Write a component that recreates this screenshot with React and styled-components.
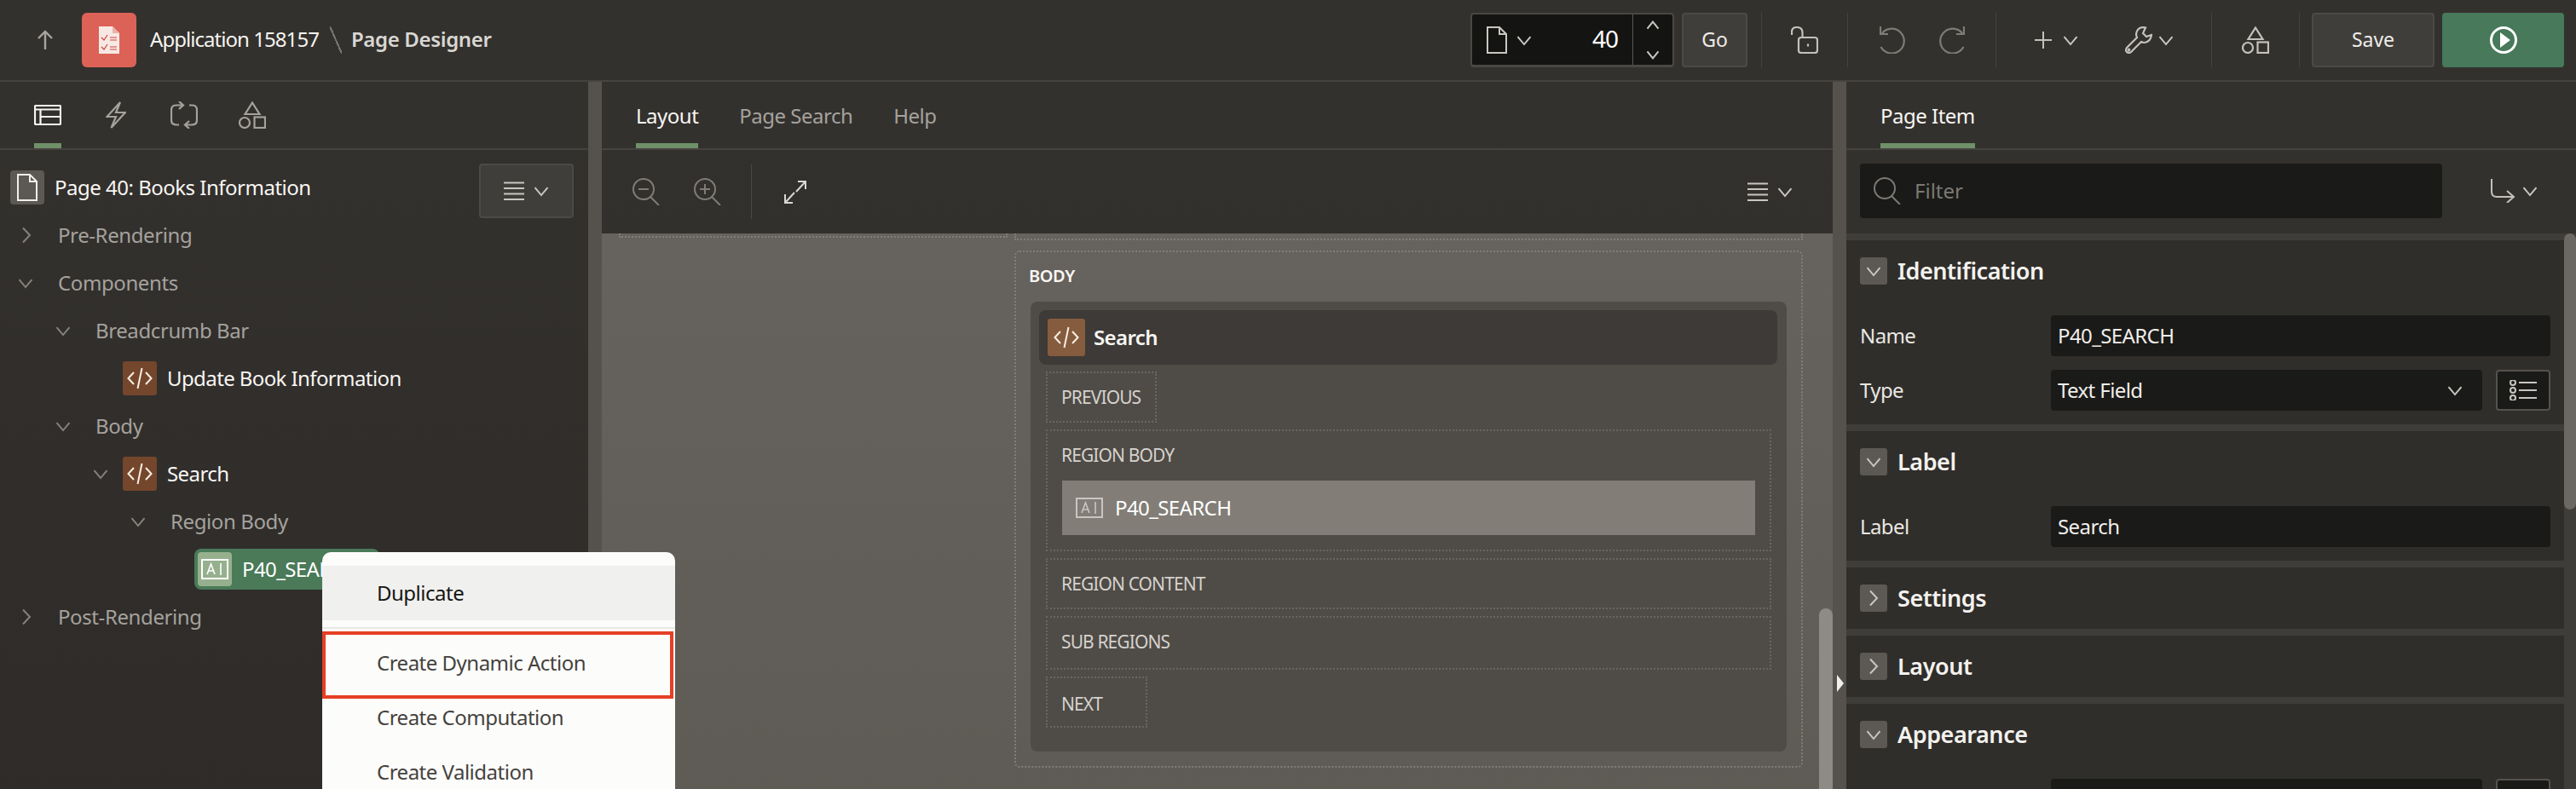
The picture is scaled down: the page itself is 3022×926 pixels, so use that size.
import React from "react";
import styled, { createGlobalStyle } from "styled-components";

const GlobalStyle = createGlobalStyle`
  html, body { margin: 0; padding: 0; background: #32302d; }
  * { box-sizing: border-box; }
  body { font-family: "Noto Sans", "Open Sans", sans-serif; }
`;

const Svg = ({ w, h, sw = 2, children, vb }) => (
  <svg width={w} height={h} viewBox={vb || `0 0 ${w} ${h}`} fill="none" stroke="currentColor" strokeWidth={sw} style={{ display: "block", flex: "none" }}>
    {children}
  </svg>
);

const ChevronDown = ({ size = 18 }) => (
  <Svg w={size} h={size}><path d={`M1.5 ${size * 0.28}L${size / 2} ${size * 0.78}L${size - 1.5} ${size * 0.28}`} /></Svg>
);
const ChevronRight = () => (
  <Svg w={12} h={20}><path d="M2 1.5L10 10L2 18.5" /></Svg>
);
const ArrowUp = () => (
  <Svg w={20} h={24}><path d="M10 23V2M2 10L10 2L18 10" strokeWidth="2.4" /></Svg>
);
const AppDoc = () => (
  <svg width="24" height="32" viewBox="0 0 24 32" style={{ display: "block" }}>
    <path d="M0 0H16L24 8V32H0Z" fill="#f8e8e4" />
    <path d="M16 0L24 8H16Z" fill="#e9b3aa" />
    <path d="M3 13L6 16L10 10M3 24L6 27L10 21M13 13H21M13 16H21M13 24H21M13 27H21" stroke="#c9453a" strokeWidth="1.2" fill="none" />
  </svg>
);
const TableIcon = () => (
  <Svg w={32} h={24} sw={2.2}><rect x="1" y="1" width="30" height="22" rx="1" /><path d="M1 5.5H31M7.5 5.5V23M7.5 14H31" /></Svg>
);
const BoltIcon = () => (
  <Svg w={24} h={32} sw={2.2}><path d="M17 1L1.5 18H12L6.5 31L23 13H12Z" /></Svg>
);
const SyncIcon = () => (
  <Svg w={32} h={32} sw={2.2}>
    <path d="M15 4.5H7Q1 4.5 1 10V22Q1 27.5 7 27.5H10M10 0L15 4.5L10 9M22 4.5H25Q31 4.5 31 10V22Q31 27.5 25 27.5H17M22 23L17 27.5L22 32" />
  </Svg>
);
const ShapesIcon = ({ size = 32 }) => (
  <Svg w={size} h={size} sw={2.2} vb="0 0 32 32">
    <path d="M16 1.5L24.5 15H7.5Z" /><circle cx="7" cy="25" r="6" /><rect x="18.5" y="18.5" width="12.5" height="12.5" />
  </Svg>
);
const PageIcon = ({ w = 24, h = 32 }) => (
  <Svg w={w} h={h} vb="0 0 24 32"><path d="M1 1H15L23 9V31H1ZM15 1V9H23" /></Svg>
);
const CodeIcon = ({ size = 30 }) => (
  <Svg w={size} h={size} sw={2} vb="0 0 30 30"><path d="M8 8L1.5 15L8 22M22 8L28.5 15L22 22M17.5 3L12.5 27" /></Svg>
);
const FieldIcon = ({ w = 32, h = 24 }) => (
  <Svg w={w} h={h} vb="0 0 32 24"><rect x="1" y="1" width="30" height="22" /><path d="M7 18L11.5 6L16 18M8.5 14H14.5M23 5V19" strokeWidth="1.6" /></Svg>
);
const MenuLines = () => (
  <Svg w={24} h={22}><path d="M0 1.5H24M0 8H24M0 14.5H24M0 21H24" /></Svg>
);
const SearchIcon = ({ children, size = 32 }) => (
  <Svg w={size} h={size} vb="0 0 32 32"><circle cx="13" cy="13" r="12" /><path d="M21 22L31 32" />{children}</Svg>
);
const ExpandIcon = () => (
  <Svg w={26} h={28}><path d="M16 2H25V11M25 2L14 14M1 17V27H10M1 27L12 15" /></Svg>
);
const LockIcon = () => (
  <Svg w={32} h={32} sw={2.2}>
    <path d="M1 10V6.5Q1 1 7 1Q13 1 13.5 6.5V12" /><rect x="9" y="13" width="22" height="18" rx="3" /><path d="M20 20.5V23.5" />
  </Svg>
);
const UndoIcon = () => (
  <Svg w={30} h={32} sw={2.2}><path d="M3 8A14.5 14.5 0 1 1 1.5 24M1 0V9H10" /></Svg>
);
const RedoIcon = () => (
  <Svg w={30} h={32} sw={2.2}><path d="M27 8A14.5 14.5 0 1 0 28.5 24M29 0V9H20" /></Svg>
);
const PlusIcon = () => (
  <Svg w={20} h={20}><path d="M10 0V20M0 10H20" /></Svg>
);
const WrenchIcon = () => (
  <Svg w={32} h={32} sw={2.2}>
    <path d="M22 1Q14 1 13 9Q13 11 14 13L2 25Q0 28 2 30Q5 32 7 30L19 18Q21 19 23 19Q30 18 31 10L25 12L21 8L24 1.5Z" />
    <circle cx="4.5" cy="27.5" r="0.8" />
  </Svg>
);
const PlayIcon = () => (
  <svg width="32" height="32" viewBox="0 0 32 32" style={{ display: "block" }}>
    <circle cx="16" cy="16" r="14.5" fill="none" stroke="#fff" strokeWidth="3" />
    <path d="M12 7L24 16L12 25Z" fill="#fff" />
  </svg>
);
const ListIcon = () => (
  <Svg w={32} h={24}><circle cx="4" cy="3" r="3" /><circle cx="4" cy="12" r="3" /><circle cx="4" cy="21" r="3" /><path d="M11 3H32M11 12H32M11 21H32" /></Svg>
);
const ReturnIcon = () => (
  <Svg w={30} h={28}><path d="M2 0V15Q2 21 8 21H28M20 14L28 21L20 28" /></Svg>
);

const Page = styled.div`
  position: relative;
  width: 3022px;
  height: 926px;
  overflow: hidden;
  background: #32302d;
  color: #f4f2ee;
`;

const Header = styled.header`
  height: 96px;
  display: flex;
  align-items: center;
  padding-right: 14px;
  background: #33312e;
  border-bottom: 2px solid #45433f;
`;
const BackButton = styled.div`
  width: 96px;
  padding-left: 43px;
  color: #a8a5a0;
`;
const AppBadge = styled.div`
  width: 64px;
  height: 64px;
  border-radius: 6px;
  background: #dc6257;
  display: flex;
  align-items: center;
  justify-content: center;
`;
const Crumb = styled.div`
  margin: 0 0 3px 16px;
  font-size: 24px;
  letter-spacing: -0.95px;
  color: #f6f4f0;
`;
const CrumbSlash = styled.div`
  width: 14px;
  height: 32px;
  margin: 0 11px 0 13px;
  background: linear-gradient(to top right, transparent 46%, #77746f 46%, #77746f 54%, transparent 54%);
`;
const CrumbTitle = styled.div`
  margin-bottom: 3px;
  font-size: 24px;
  font-weight: 600;
  letter-spacing: -0.35px;
  color: #d9d7d2;
`;
const HeaderTools = styled.div`
  margin-left: auto;
  display: flex;
  align-items: center;
`;
const PageSelect = styled.div`
  width: 239px;
  height: 64px;
  display: flex;
  align-items: center;
  padding-left: 17px;
  background: #141412;
  border: 2px solid #4a4844;
  border-bottom-width: 3px;
  border-radius: 4px;
  color: #c9c6c1;
`;
const PageNumber = styled.div`
  flex: 1;
  text-align: right;
  padding: 0 17px 3px 0;
  font-size: 28px;
  letter-spacing: -1px;
  color: #fff;
`;
const Spinner = styled.div`
  width: 47px;
  height: 100%;
  border-left: 1px solid #5a5854;
  display: flex;
  flex-direction: column;
  align-items: center;
  justify-content: center;
  gap: 18px;
  color: #b5b2ad;
`;
const SmallChevron = styled.span`
  display: block;
  flex: none;
  margin-left: ${(p) => p.$ml || 11}px;
  color: ${(p) => p.$color || "#c9c6c1"};
  transform: ${(p) => (p.$up ? "rotate(180deg)" : "none")};
`;
const SpinChevron = styled(SmallChevron)`
  margin-left: 0;
`;
const HeadButton = styled.div`
  width: ${(p) => p.$w}px;
  height: 64px;
  margin-left: ${(p) => p.$ml}px;
  padding-bottom: ${(p) => (p.$bg ? 0 : 3)}px;
  display: flex;
  align-items: center;
  justify-content: center;
  font-size: 23px;
  border-radius: 4px;
  background: ${(p) => p.$bg || "#403e3a"};
  border: ${(p) => (p.$bg ? "none" : "2px solid #4c4a46")};
  color: #eeece8;
`;
const ToolDivider = styled.div`
  width: 1px;
  height: 64px;
  margin-left: ${(p) => p.$ml || 0}px;
  background: #45433f;
`;
const ToolSlot = styled.div`
  width: ${(p) => p.$w}px;
  display: flex;
  align-items: center;
  justify-content: center;
  gap: ${(p) => p.$gap || 0}px;
  color: ${(p) => p.$color || "#c4c1bc"};
`;
const IconPair = styled.div`
  display: flex;
  align-items: center;
`;

const Main = styled.main`
  display: grid;
  grid-template-columns: 690px 16px 1444px 16px 856px;
  height: 830px;
`;
const Panel = styled.section`
  min-width: 0;
  background: linear-gradient(#33312e, #2e2b29);
  display: flex;
  flex-direction: column;
`;
const Splitter = styled.div`
  position: relative;
  background: #55524e;
`;
const SplitterArrow = styled.div`
  position: absolute;
  left: 5px;
  top: 696px;
  border-left: 8px solid #f2f0ec;
  border-top: 10px solid transparent;
  border-bottom: 10px solid transparent;
`;

const TabBar = styled.div`
  height: 80px;
  flex: none;
  padding-left: 40px;
  display: flex;
  gap: ${(p) => p.$gap || 48}px;
  background: #33312e;
  border-bottom: 2px solid #45433f;
`;
const IconTab = styled.div`
  width: 32px;
  height: 78px;
  padding-top: 24px;
  display: flex;
  justify-content: center;
  align-items: center;
  padding-bottom: 18px;
  border-bottom: 6px solid ${(p) => (p.$active ? "#6f9068" : "transparent")};
  color: ${(p) => (p.$active ? "#f8f6f2" : "#a5a29d")};
`;
const TextTab = styled.div`
  height: 78px;
  padding-top: 23px;
  line-height: 34px;
  font-size: 24px;
  letter-spacing: -0.5px;
  white-space: nowrap;
  border-bottom: 6px solid ${(p) => (p.$active ? "#6f9068" : "transparent")};
  color: ${(p) => (p.$active ? "#f8f6f2" : "#a5a29d")};
`;

const TreeHead = styled.div`
  height: 56px;
  margin-top: 16px;
  padding-left: 12px;
  padding-right: 17px;
  display: flex;
  align-items: center;
`;
const PageBadge = styled.div`
  width: 40px;
  height: 40px;
  border-radius: 4px;
  background: #5c5954;
  display: flex;
  align-items: center;
  justify-content: center;
  color: #f0eeea;
`;
const TreeTitle = styled.div`
  margin: 0 0 1px 12px;
  font-size: 24px;
  letter-spacing: -0.5px;
  color: #f8f6f2;
`;
const MenuButton = styled.div`
  margin-left: auto;
  align-self: flex-start;
  width: 111px;
  height: 64px;
  display: flex;
  align-items: center;
  justify-content: center;
  background: #403e3a;
  border: 2px solid #4c4a46;
  border-radius: 4px;
  color: #c9c6c1;
`;
const Tree = styled.div`
  display: flex;
  flex-direction: column;
`;
const TreeRow = styled.div`
  height: 56px;
  flex: none;
  display: flex;
  align-items: center;
  padding-left: ${(p) => 12 + p.$level * 44}px;
  font-size: 24px;
  letter-spacing: ${(p) => (p.$bright ? -0.6 : -0.4)}px;
  line-height: 30px;
  white-space: nowrap;
  color: ${(p) => (p.$bright ? "#f8f6f2" : "#a5a29d")};
`;
const RowText = styled.span`
  margin-bottom: 1px;
`;
const ChevronSlot = styled.div`
  width: ${(p) => p.$w}px;
  flex: none;
  padding-left: ${(p) => (p.$right ? 13 : 9)}px;
  color: #85827d;
`;
const CodeBadge = styled.div`
  width: ${(p) => p.$size || 40}px;
  height: ${(p) => p.$size || 40}px;
  flex: none;
  margin-right: ${(p) => p.$mr || 12}px;
  border-radius: 3px;
  background: ${(p) => p.$bg || "#74462c"};
  display: flex;
  align-items: center;
  justify-content: center;
  color: #f8efe6;
`;
const SelectedNode = styled.div`
  width: 217px;
  height: 48px;
  margin-left: 40px;
  padding-left: 4px;
  display: flex;
  align-items: center;
  border-radius: 8px;
  background: #4a7a58;
  color: #fff;
`;
const NodeBadge = styled.div`
  width: 40px;
  height: 40px;
  flex: none;
  margin-right: 12px;
  border-radius: 4px;
  background: #96b08e;
  display: flex;
  align-items: center;
  justify-content: center;
  color: #fff;
`;

const ContextMenu = styled.div`
  position: absolute;
  left: 378px;
  top: 648px;
  width: 414px;
  height: 290px;
  padding-top: 16px;
  border-radius: 10px 10px 0 0;
  background: #fcfcfa;
  font-size: 24px;
  letter-spacing: -0.5px;
  color: #2f2d2a;
`;
const MenuItem = styled.div`
  height: 64px;
  padding: 0 0 1px 64px;
  display: flex;
  align-items: center;
  background: ${(p) => (p.$hover ? "#f0f0ee" : "transparent")};
  color: ${(p) => (p.$hover ? "#161513" : "#45423e")};
`;
const MenuSeparator = styled.div`
  height: 2px;
  margin: 8px 0;
  background: #e8e8e6;
`;
const Callout = styled.div`
  position: absolute;
  left: 0;
  top: 93px;
  width: 412px;
  height: 79px;
  border: 4px solid #e63f26;
`;

const Toolbar = styled.div`
  height: 98px;
  flex: none;
  padding: 0 47px 0 36px;
  display: flex;
  align-items: center;
  color: #7f7c77;
`;
const ToolGroup = styled.div`
  display: flex;
  align-items: center;
  gap: 40px;
`;
const VLine = styled.div`
  width: 1px;
  height: 64px;
  margin: 0 38px 0 35px;
  background: #4a4844;
`;
const ExpandSlot = styled.div`
  color: #d9d7d2;
`;
const ToolbarMenu = styled.div`
  margin-left: auto;
  display: flex;
  align-items: center;
  color: #c9c6c1;
`;

const Canvas = styled.div`
  position: relative;
  flex: 1;
  min-height: 0;
  overflow: hidden;
  display: grid;
  grid-template-columns: 456px 925px;
  gap: 8px;
  padding-left: 20px;
  align-items: start;
  background: linear-gradient(#66625d, #5e5a54);
`;
const StubLeft = styled.div`
  height: 5px;
  border: 2px dotted #817d77;
  border-top: none;
`;
const StubTop = styled.div`
  height: 8px;
  margin-bottom: 12px;
  border: 2px dotted #817d77;
  border-top: none;
`;
const BodyBox = styled.div`
  height: 607px;
  padding: 0 17px;
  border: 2px dotted #817d77;
  border-radius: 6px;
`;
const BodyTitle = styled.div`
  height: 58px;
  padding-bottom: 3px;
  margin-left: -2px;
  display: flex;
  align-items: center;
  font-size: 20px;
  font-weight: 600;
  letter-spacing: -0.4px;
  color: #f8f6f2;
`;
const RegionCard = styled.div`
  height: 528px;
  padding: 10px 11px 0 10px;
  border-radius: 8px;
  background: #4f4b46;
`;
const RegionHeader = styled.div`
  height: 64px;
  padding-left: 10px;
  display: flex;
  align-items: center;
  border-radius: 8px;
  background: #3d3a37;
  font-size: 24px;
  font-weight: 600;
  letter-spacing: -0.6px;
  color: #f8f6f2;
`;
const Zones = styled.div`
  display: flex;
  flex-direction: column;
  align-items: flex-start;
  gap: 8px;
  padding: 8px 7px 0 8px;
`;
const Zone = styled.div`
  width: ${(p) => (p.$w ? `${p.$w}px` : "100%")};
  height: ${(p) => p.$h}px;
  padding: 0 17px;
  border: 2px dotted #696560;
  font-size: 21px;
  letter-spacing: -0.9px;
  color: #d5d2cd;
`;
const ZoneLabel = styled.div`
  height: ${(p) => p.$h || 56}px;
  margin-left: -1px;
  padding-bottom: 1px;
  display: flex;
  align-items: center;
  white-space: nowrap;
`;
const ZoneItem = styled.div`
  height: 64px;
  margin-top: 2px;
  padding-left: 16px;
  display: flex;
  align-items: center;
  gap: 14px;
  background: #827e77;
  font-size: 24px;
  letter-spacing: -0.6px;
  color: #fff;
`;
const ZoneItemIcon = styled.div`
  color: #c9c6c1;
`;
const CanvasScroll = styled.div`
  position: absolute;
  right: 0;
  top: 440px;
  bottom: 0;
  width: 16px;
  border-radius: 8px 8px 0 0;
  background: #8e8a85;
`;

const FilterBar = styled.div`
  height: 98px;
  flex: none;
  padding: 16px 0 0 16px;
  display: flex;
  align-items: flex-start;
  background: #33312e;
`;
const FilterBox = styled.div`
  width: 683px;
  height: 64px;
  padding: 0 0 1px 16px;
  display: flex;
  align-items: center;
  gap: 16px;
  border-radius: 4px;
  background: #1a1a18;
  font-size: 24px;
  color: #7c7974;
`;
const FilterAction = styled.div`
  height: 64px;
  margin-left: 56px;
  display: flex;
  align-items: center;
  color: #c4c1bc;
`;
const Sections = styled.div`
  position: relative;
  flex: 1;
  min-height: 0;
  overflow: hidden;
  display: flex;
  flex-direction: column;
  gap: 8px;
  padding: 8px 14px 0 0;
  background: #3f3d3a;
`;
const ScrollThumb = styled.div`
  position: absolute;
  right: 0;
  top: 0;
  width: 14px;
  height: 324px;
  border-radius: 7px;
  background: #6b6864;
`;
const Section = styled.div`
  flex: none;
  padding-bottom: ${(p) => (p.$open ? 16 : 0)}px;
  background: #302e2b;
`;
const SectionHead = styled.div`
  height: 72px;
  padding-left: 16px;
  display: flex;
  align-items: center;
  gap: 12px;
  font-size: 27px;
  font-weight: 600;
  letter-spacing: -0.45px;
  color: #f4f2ee;
`;
const Toggle = styled.div`
  width: 32px;
  height: 32px;
  border-radius: 3px;
  background: #5c5954;
  display: flex;
  align-items: center;
  justify-content: center;
  color: #c9c6c1;
`;
const Fields = styled.div`
  margin-top: 16px;
  padding: 0 16px;
  display: flex;
  flex-direction: column;
  gap: 16px;
`;
const FieldRow = styled.div`
  display: grid;
  grid-template-columns: 224px 1fr;
  align-items: center;
  font-size: 24px;
  letter-spacing: -0.6px;
  color: #e9e7e2;
`;
const FieldLabel = styled.span`
  margin-bottom: 1px;
`;
const FieldGroup = styled.div`
  display: flex;
  gap: 16px;
`;
const Input = styled.div`
  flex: 1;
  height: 48px;
  padding: 0 8px 1px;
  display: flex;
  align-items: center;
  justify-content: space-between;
  border-radius: 4px;
  background: #1a1a18;
  color: #f0eeea;
`;
const InputChevron = styled.div`
  margin-right: 15px;
  color: #c9c6c1;
`;
const SideButton = styled.div`
  width: 64px;
  height: 48px;
  display: flex;
  align-items: center;
  justify-content: center;
  border-radius: 4px;
  background: #1a1a18;
  border: 2px solid #55524e;
  color: #c9c6c1;
`;

const SECTIONS = [
  { title: "Settings" },
  { title: "Layout" },
];

const TogglePart = ({ open }) => (
  <Toggle>{open ? <ChevronDown /> : <ChevronRight />}</Toggle>
);

const TreeChevron = ({ right }) => (right ? <ChevronRight /> : <ChevronDown />);

const App = () => (
  <Page>
    <GlobalStyle />
    <Header>
      <BackButton><ArrowUp /></BackButton>
      <AppBadge><AppDoc /></AppBadge>
      <Crumb>Application 158157</Crumb>
      <CrumbSlash />
      <CrumbTitle>Page Designer</CrumbTitle>
      <HeaderTools>
        <PageSelect>
          <PageIcon />
          <SmallChevron><ChevronDown /></SmallChevron>
          <PageNumber>40</PageNumber>
          <Spinner>
            <SpinChevron $up><ChevronDown size={16} /></SpinChevron>
            <SpinChevron><ChevronDown size={16} /></SpinChevron>
          </Spinner>
        </PageSelect>
        <HeadButton $w={77} $ml={9}>Go</HeadButton>
        <ToolDivider $ml={16} />
        <ToolSlot $w={100}><LockIcon /></ToolSlot>
        <ToolDivider />
        <ToolSlot $w={173} $gap={40} $color="#7f7c77"><UndoIcon /><RedoIcon /></ToolSlot>
        <ToolDivider />
        <ToolSlot $w={252} $gap={55}>
          <IconPair><PlusIcon /><SmallChevron $ml={13}><ChevronDown /></SmallChevron></IconPair>
          <IconPair><WrenchIcon /><SmallChevron $ml={7}><ChevronDown /></SmallChevron></IconPair>
        </ToolSlot>
        <ToolDivider />
        <ToolSlot $w={102}><ShapesIcon /></ToolSlot>
        <ToolDivider />
        <HeadButton $w={144} $ml={14}>Save</HeadButton>
        <HeadButton $w={143} $ml={9} $bg="#47795a"><PlayIcon /></HeadButton>
      </HeaderTools>
    </Header>

    <Main>
      <Panel>
        <TabBar>
          <IconTab $active><TableIcon /></IconTab>
          <IconTab><BoltIcon /></IconTab>
          <IconTab><SyncIcon /></IconTab>
          <IconTab><ShapesIcon /></IconTab>
        </TabBar>
        <TreeHead>
          <PageBadge><PageIcon /></PageBadge>
          <TreeTitle>Page 40: Books Information</TreeTitle>
          <MenuButton><MenuLines /><SmallChevron><ChevronDown /></SmallChevron></MenuButton>
        </TreeHead>
        <Tree>
          <TreeRow $level={0}><ChevronSlot $w={56} $right><TreeChevron right /></ChevronSlot><RowText>Pre-Rendering</RowText></TreeRow>
          <TreeRow $level={0}><ChevronSlot $w={56}><TreeChevron /></ChevronSlot><RowText>Components</RowText></TreeRow>
          <TreeRow $level={1}><ChevronSlot $w={56}><TreeChevron /></ChevronSlot><RowText>Breadcrumb Bar</RowText></TreeRow>
          <TreeRow $level={2} $bright><ChevronSlot $w={44} /><CodeBadge><CodeIcon /></CodeBadge><RowText>Update Book Information</RowText></TreeRow>
          <TreeRow $level={1}><ChevronSlot $w={56}><TreeChevron /></ChevronSlot><RowText>Body</RowText></TreeRow>
          <TreeRow $level={2} $bright><ChevronSlot $w={44}><TreeChevron /></ChevronSlot><CodeBadge><CodeIcon /></CodeBadge><RowText>Search</RowText></TreeRow>
          <TreeRow $level={3}><ChevronSlot $w={56}><TreeChevron /></ChevronSlot><RowText>Region Body</RowText></TreeRow>
          <TreeRow $level={4} $bright>
            <SelectedNode><NodeBadge><FieldIcon /></NodeBadge><RowText>P40_SEARCH</RowText></SelectedNode>
          </TreeRow>
          <TreeRow $level={0}><ChevronSlot $w={56} $right><TreeChevron right /></ChevronSlot><RowText>Post-Rendering</RowText></TreeRow>
        </Tree>
      </Panel>

      <Splitter />

      <Panel>
        <TabBar $gap={48}>
          <TextTab $active>Layout</TextTab>
          <TextTab>Page Search</TextTab>
          <TextTab>Help</TextTab>
        </TabBar>
        <Toolbar>
          <ToolGroup>
            <SearchIcon><path d="M7 13H19" /></SearchIcon>
            <SearchIcon><path d="M7 13H19M13 7V19" /></SearchIcon>
          </ToolGroup>
          <VLine />
          <ExpandSlot><ExpandIcon /></ExpandSlot>
          <ToolbarMenu><MenuLines /><SmallChevron><ChevronDown /></SmallChevron></ToolbarMenu>
        </Toolbar>
        <Canvas>
          <StubLeft />
          <div>
            <StubTop />
            <BodyBox>
              <BodyTitle>BODY</BodyTitle>
              <RegionCard>
                <RegionHeader>
                  <CodeBadge $size={44} $mr={10} $bg="#865c3e"><CodeIcon /></CodeBadge>
                  <RowText>Search</RowText>
                </RegionHeader>
                <Zones>
                  <Zone $w={130} $h={60}><ZoneLabel>PREVIOUS</ZoneLabel></Zone>
                  <Zone $h={143}>
                    <ZoneLabel>REGION BODY</ZoneLabel>
                    <ZoneItem><ZoneItemIcon><FieldIcon /></ZoneItemIcon><RowText>P40_SEARCH</RowText></ZoneItem>
                  </Zone>
                  <Zone $h={60}><ZoneLabel>REGION CONTENT</ZoneLabel></Zone>
                  <Zone $h={63}><ZoneLabel>SUB REGIONS</ZoneLabel></Zone>
                  <Zone $w={119} $h={60}><ZoneLabel $h={60}>NEXT</ZoneLabel></Zone>
                </Zones>
              </RegionCard>
            </BodyBox>
          </div>
          <CanvasScroll />
        </Canvas>
      </Panel>

      <Splitter><SplitterArrow /></Splitter>

      <Panel>
        <TabBar>
          <TextTab $active>Page Item</TextTab>
        </TabBar>
        <FilterBar>
          <FilterBox><SearchIcon />Filter</FilterBox>
          <FilterAction><ReturnIcon /><SmallChevron $ml={8}><ChevronDown /></SmallChevron></FilterAction>
        </FilterBar>
        <Sections>
          <Section $open>
            <SectionHead><TogglePart open /><RowText>Identification</RowText></SectionHead>
            <Fields>
              <FieldRow><FieldLabel>Name</FieldLabel><Input>P40_SEARCH</Input></FieldRow>
              <FieldRow><FieldLabel>Type</FieldLabel>
                <FieldGroup>
                  <Input>Text Field<InputChevron><ChevronDown /></InputChevron></Input>
                  <SideButton><ListIcon /></SideButton>
                </FieldGroup>
              </FieldRow>
            </Fields>
          </Section>
          <Section $open>
            <SectionHead><TogglePart open /><RowText>Label</RowText></SectionHead>
            <Fields>
              <FieldRow><FieldLabel>Label</FieldLabel><Input>Search</Input></FieldRow>
            </Fields>
          </Section>
          {SECTIONS.map((s) => (
            <Section key={s.title}>
              <SectionHead><TogglePart /><RowText>{s.title}</RowText></SectionHead>
            </Section>
          ))}
          <Section $open>
            <SectionHead><TogglePart open /><RowText>Appearance</RowText></SectionHead>
            <Fields>
              <FieldRow><span />
                <FieldGroup>
                  <Input />
                  <SideButton />
                </FieldGroup>
              </FieldRow>
            </Fields>
          </Section>
          <ScrollThumb />
        </Sections>
      </Panel>
    </Main>

    <ContextMenu>
      <MenuItem $hover>Duplicate</MenuItem>
      <MenuSeparator />
      <MenuItem>Create Dynamic Action</MenuItem>
      <MenuItem>Create Computation</MenuItem>
      <MenuItem>Create Validation</MenuItem>
      <Callout />
    </ContextMenu>
  </Page>
);

export default App;
